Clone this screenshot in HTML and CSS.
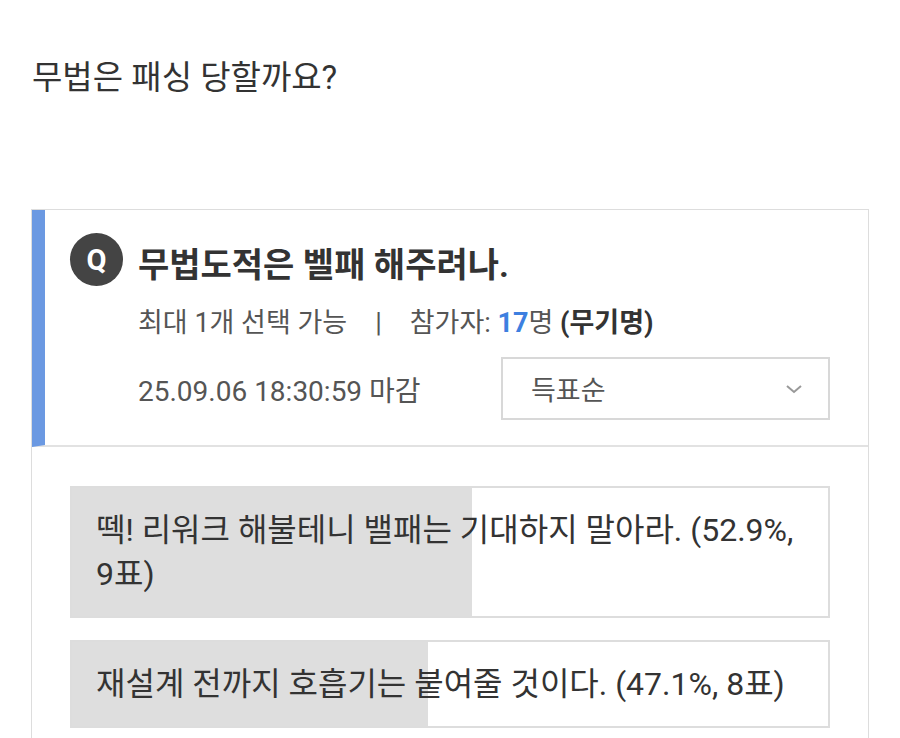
FILE: index.html
```html
<!DOCTYPE html>
<html>
<head>
    <title>투표</title>
    <link rel="stylesheet" href="styles.css">
</head>
<body>
    <p class="post-text">무법은 패싱 당할까요?</p>

    <div class="poll">
        <div class="poll-head">
            <div class="poll-title">
                <span class="q-badge">Q</span>
                <h2>무법도적은 벨패 해주려나.</h2>
            </div>
            <div class="poll-info">
                <span>최대 1개 선택 가능</span>
                <span class="sep">|</span>
                <span>참가자: <b class="count">17</b>명 <b class="anon">(무기명)</b></span>
            </div>
            <div class="poll-row">
                <span class="deadline">25.09.06 18:30:59 마감</span>
                <div class="sort-select">
                    <span>득표순</span>
                    <svg width="18" height="12" viewBox="0 0 18 12"><path d="M2 3l7 6 7-6" fill="none" stroke="#999" stroke-width="2"/></svg>
                </div>
            </div>
        </div>
        <div class="poll-body">
            <div class="option">
                <div class="bar" style="width: 52.9%"></div>
                <span class="label">떽! 리워크 해불테니 밸패는 기대하지 말아라. (52.9%, 9표)</span>
            </div>
            <div class="option">
                <div class="bar" style="width: 47.1%"></div>
                <span class="label">재설계 전까지 호흡기는 붙여줄 것이다. (47.1%, 8표)</span>
            </div>
        </div>
    </div>
</body>
</html>
```

FILE: styles.css
```css
body {
    margin: 0;
    padding: 0;
    background-color: #fff;
    font-family: Roboto, "Noto Sans CJK KR", sans-serif;
    color: #333;
}
.post-text {
    margin: 0;
    padding: 56px 0 0 32px;
    font-size: 33px;
    line-height: 44px;
    height: 153px;
}
.poll {
    margin-left: 31px;
    width: 836px;
    border: 1px solid #ddd;
    border-bottom: none;
    height: 600px;
}
.poll-head {
    border-left: 13px solid #6b99e2;
    border-bottom: 2px solid #e2e2e2;
    padding: 22px 38px 25px 25px;
}
.poll-title {
    display: flex;
    align-items: center;
    gap: 15px;
}
.q-badge {
    width: 53px;
    height: 53px;
    border-radius: 50%;
    background-color: #444;
    color: #fff;
    font-weight: bold;
    font-size: 29px;
    display: flex;
    align-items: center;
    justify-content: center;
}
.poll-title h2 {
    margin: 0;
    font-size: 34px;
    font-weight: bold;
    color: #333;
    padding-top: 6px;
}
.poll-info {
    margin-top: 17px;
    padding-left: 68px;
    font-size: 27px;
    line-height: 38px;
    color: #555;
    display: flex;
    gap: 28px;
}
.count {
    color: #3d7fe0;
}
.anon {
    color: #333;
}
.poll-row {
    margin-top: 15px;
    padding-left: 68px;
    display: flex;
    justify-content: space-between;
    align-items: center;
}
.deadline {
    font-size: 28px;
    color: #555;
}
.sort-select {
    width: 329px;
    height: 63px;
    box-sizing: border-box;
    border: 2px solid #d8d8d8;
    display: flex;
    align-items: center;
    justify-content: space-between;
    padding: 0 25px 0 28px;
    font-size: 27px;
    color: #555;
}
.poll-body {
    padding: 39px 38px 0 38px;
    display: flex;
    flex-direction: column;
    gap: 22px;
}
.option {
    position: relative;
    border: 2px solid #ddd;
    padding: 20px 24px;
    font-size: 32px;
    line-height: 44px;
    color: #333;
    word-break: keep-all;
}
.bar {
    position: absolute;
    left: 0;
    top: 0;
    bottom: 0;
    background-color: #dedede;
}
.label {
    position: relative;
}
```
